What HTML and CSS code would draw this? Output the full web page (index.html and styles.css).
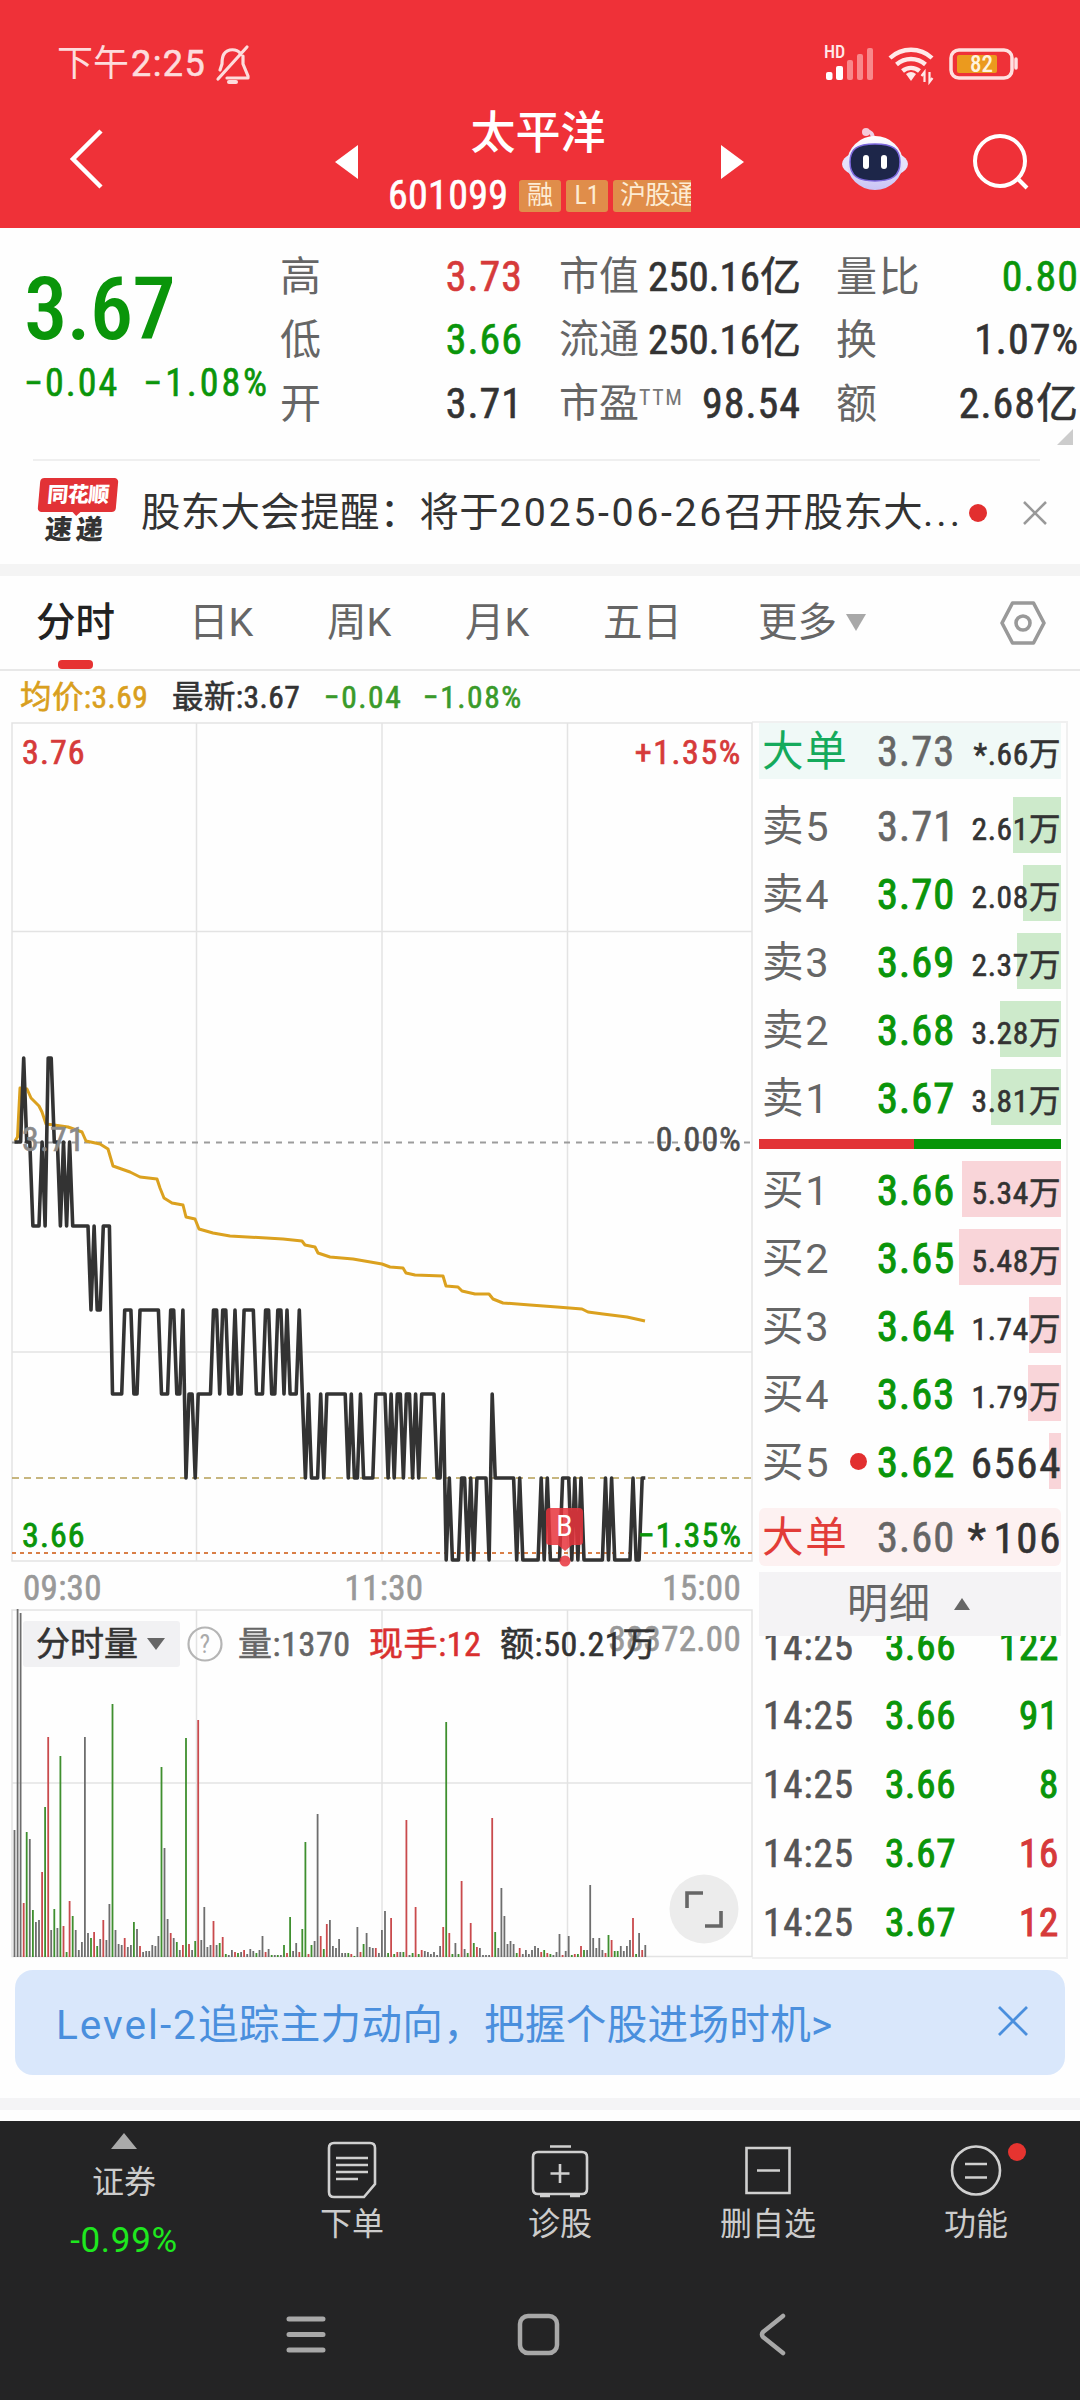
FILE: index.html
```html
<!DOCTYPE html>
<html lang="zh-CN">
<head>
<meta charset="utf-8">
<title>太平洋 601099</title>
<link rel="stylesheet" href="styles.css">
</head>
<body>
<header class="top">
  <div class="status">
    <span class="clock">下午<b>2:25</b></span>
    <svg class="bell" width="38" height="40" viewBox="0 0 38 40" fill="none" stroke="#fddcdc" stroke-width="3.2" stroke-linecap="round" stroke-linejoin="round"><path d="M33 2 4 34M29 11v8l5 12v2H13M26 8C23 4 14 3 10 9c-2 3-2 6-2 10l-2 6"/><path d="M15 37h7" stroke-width="4"/></svg>
    <div class="status-right">
      <svg width="56" height="36" viewBox="0 0 56 36"><text class="hd" x="0" y="12">HD</text><g fill="#fff"><rect x="2" y="26" width="6.500" height="8" rx="2"/><rect x="12" y="20" width="7" height="14" rx="2"/></g><g fill="#f8888b"><rect x="23" y="14" width="6" height="20" rx="2"/><rect x="33" y="8" width="6" height="26" rx="2"/><rect x="43" y="2" width="6" height="32" rx="2"/></g></svg>
      <svg class="wifi" width="48" height="38" viewBox="0 0 48 38" fill="none" stroke="#ffe9e9" stroke-width="4.400"><path d="M2 13a31 31 0 0 1 42 0M8.500 19.500a22 22 0 0 1 29 0M14.500 26a13 13 0 0 1 17 0"/><path d="M23 36l-5-7q5-4 10 0z" fill="#ffe9e9" stroke="none"/><path d="M36.500 37V27l-3 4M41.500 27v10l3-4" stroke-width="2.200"/></svg>
      <svg width="72" height="34" viewBox="0 0 72 34"><rect x="2" y="3" width="61" height="28" rx="8" fill="none" stroke="#ffe0e0" stroke-width="3.500"/><rect x="8" y="8" width="40" height="18" rx="2" fill="#eb9a1e"/><path d="M67 12v9" stroke="#ffe0e0" stroke-width="3.500" stroke-linecap="round"/><text class="batt" x="32.500" y="25" text-anchor="middle">82</text></svg>
    </div>
  </div>
  <div class="nav">
    <svg class="back" width="40" height="64" viewBox="0 0 40 64"><path d="M34 4 6 32 34 60" fill="none" stroke="#fff" stroke-width="4.500"/></svg>
    <svg class="prev" width="24" height="36" viewBox="0 0 24 36"><path d="M23 1v34L0 18z" fill="#fff"/></svg>
    <div class="title">
      <h1>太平洋</h1>
      <div class="codes"><span class="code">601099</span><span class="tag">融</span><span class="tag">L1</span><span class="tag cut">沪股通</span></div>
    </div>
    <svg class="next" width="24" height="36" viewBox="0 0 24 36"><path d="M1 1v34l23-17z" fill="#fff"/></svg>
    <svg class="robot" width="70" height="64" viewBox="0 0 70 64"><defs><linearGradient id="shell" x1="0" y1="0" x2="0" y2="1"><stop offset="0" stop-color="#fff"/><stop offset="1" stop-color="#c9c3f5"/></linearGradient></defs><path d="M33 13c0-7-2-8-7-9" fill="none" stroke="#ecd0e6" stroke-width="4" stroke-linecap="round"/><circle cx="26" cy="5" r="4" fill="#f6c9d8"/><ellipse cx="35" cy="37" rx="33" ry="15" fill="#e6e2fb"/><ellipse cx="35" cy="36" rx="28" ry="27" fill="url(#shell)"/><path d="M35 17c18 0 25 5 25 18 0 14-8 19-25 19S10 49 10 35c0-13 7-18 25-18z" fill="#1d2649" stroke="#7c68dd" stroke-width="1.500"/><rect x="23" y="28" width="6" height="14" rx="3" fill="#fff"/><rect x="41" y="28" width="6" height="14" rx="3" fill="#fff"/></svg>
    <svg class="search" width="58" height="58" viewBox="0 0 58 58" fill="none" stroke="#fff" stroke-width="4"><circle cx="28" cy="28" r="25"/><path d="m46 46 9 9"/></svg>
  </div>
</header>

<section class="quote">
  <div class="last down">
    <div class="price">3.67</div>
    <div class="chg"><span>−0.04</span><span>−1.08%</span></div>
  </div>
  <dl class="c1">
    <div><dt>高</dt><dd class="up">3.73</dd></div>
    <div><dt>低</dt><dd class="down">3.66</dd></div>
    <div><dt>开</dt><dd>3.71</dd></div>
  </dl>
  <dl class="c2">
    <div><dt>市值</dt><dd class="tight">250.16亿</dd></div>
    <div><dt>流通</dt><dd class="tight">250.16亿</dd></div>
    <div><dt>市盈<sup>TTM</sup></dt><dd>98.54</dd></div>
  </dl>
  <dl class="c3">
    <div><dt>量比</dt><dd class="down">0.80</dd></div>
    <div><dt>换</dt><dd>1.07%</dd></div>
    <div><dt>额</dt><dd>2.68亿</dd></div>
  </dl>
  <i class="corner"></i>
</section>

<section class="news">
  <div class="logo"><span class="logo-a">同花顺</span><span class="logo-b">速递</span></div>
  <p>股东大会提醒：将于<span class="date">2025-06-26</span>召开股东大<span class="dots">...</span></p>
  <i class="dot"></i>
  <svg width="24" height="24" viewBox="0 0 24 24"><path d="m1 1 22 22M23 1 1 23" stroke="#999" stroke-width="2.500"/></svg>
</section>

<nav class="tabs">
  <span class="on">分时</span><span>日K</span><span>周K</span><span>月K</span><span>五日</span><span>更多<i></i></span>
  <svg width="46" height="44" viewBox="0 0 46 44" fill="none" stroke="#999" stroke-width="3.600" stroke-linejoin="round"><path d="M12.500 2h21L44 22 33.500 42h-21L2 22z"/><circle cx="23" cy="22" r="7"/></svg>
</nav>

<div class="info"><span class="avg">均价:3.69</span><span>最新:3.67</span><span class="g">−0.04</span><span class="g">−1.08%</span></div>

<main class="board">
  <div class="charts">
    <svg id="chart" width="752" height="1240" viewBox="0 720 752 1240">
      <g class="grid">
        <path d="M12 723H752V1561H12zM12 1610H752V1956.500H12z"/>
        <path d="M196.500 723V1561M382 723V1561M567.500 723V1561M12 931.500H752M12 1352H752M196.500 1610V1956M382 1610V1956M567.500 1610V1956M12 1783H752"/>
      </g>
      <path class="zero" d="M12 1142.500H752"/>
      <path class="level" d="M12 1478H752"/>
      <path class="low" d="M12 1553H752"/>
      <g id="bars"></g>
      <path class="mean" d="M15 1141 17.500 1137 20 1088 27 1089 31 1098 39 1106 42 1112 46 1124 54 1125 68 1127 82 1132 86 1141 100 1144 108 1149 113 1166 130 1172 140 1177 157 1179 160 1188 164 1198 172 1203 183 1205 186 1217 195 1219 199 1229 213 1233 230 1236 283 1239 302 1241 305 1245 315 1247 318 1253 330 1257 353 1259 382 1264 390 1267 403 1268 406 1273 415 1275 443 1276 446 1286 458 1287 462 1291 475 1294 489 1294 493 1299 503 1303 530 1305 557 1307 582 1309 588 1312 603 1314 627 1317 645 1321"/>
      <path class="line" id="line"/>
      <g class="lab">
        <text class="up" x="22" y="764">3.76</text><text class="up wide" x="742" y="764" text-anchor="end">+1.35%</text>
        <text class="ref" x="22" y="1151">3.71</text><text class="mid" x="742" y="1151" text-anchor="end">0.00%</text>
        <text class="down" x="22" y="1547">3.66</text><text class="down" x="742" y="1547" text-anchor="end">−1.35%</text>
      </g>
      <g class="time"><text x="23" y="1600">09:30</text><text x="384" y="1600" text-anchor="middle">11:30</text><text x="741" y="1600" text-anchor="end">15:00</text><text x="741" y="1651" text-anchor="end">38372.00</text></g>
      <g class="buy"><path d="M550 1508h29q4 0 4 4v30q0 3-4 3h-7l-7 6-7-6h-8q-4 0-4-3v-30q0-4 4-4z"/><circle cx="565" cy="1561" r="5.500"/><text x="564.500" y="1536" text-anchor="middle">B</text></g>
    </svg>
    <div class="vol-head">
      <span class="pick">分时量<i></i></span>
      <svg width="36" height="36" viewBox="0 0 36 36"><circle cx="18" cy="18" r="16.500" fill="none" stroke="#b5b5b5" stroke-width="2.200"/><text x="18" y="27" text-anchor="middle" class="q">?</text></svg>
      <span class="v1">量:1370</span><span class="v2">现手:12</span><span class="v3">额:50.21万</span>
    </div>
    <svg class="expand" width="70" height="70" viewBox="0 0 70 70"><circle cx="35" cy="35" r="34.500" fill="#ececec"/><path d="M18 34V19h16M52 37v15H36" fill="none" stroke="#666" stroke-width="3.600"/></svg>
  </div>

  <aside class="book">
    <div class="row big sell"><span>大单</span><b class="flat">3.73</b><em>*.66万</em></div>
    <div class="asks">
      <div class="row"><i style="width:48px"></i><span>卖5</span><b class="flat">3.71</b><em>2.61万</em></div>
      <div class="row"><i style="width:38px"></i><span>卖4</span><b>3.70</b><em>2.08万</em></div>
      <div class="row"><i style="width:44px"></i><span>卖3</span><b>3.69</b><em>2.37万</em></div>
      <div class="row"><i style="width:61px"></i><span>卖2</span><b>3.68</b><em>3.28万</em></div>
      <div class="row"><i style="width:70px"></i><span>卖1</span><b>3.67</b><em>3.81万</em></div>
    </div>
    <div class="split"><i></i></div>
    <div class="bids">
      <div class="row"><i style="width:99px"></i><span>买1</span><b>3.66</b><em>5.34万</em></div>
      <div class="row"><i style="width:102px"></i><span>买2</span><b>3.65</b><em>5.48万</em></div>
      <div class="row"><i style="width:32px"></i><span>买3</span><b>3.64</b><em>1.74万</em></div>
      <div class="row"><i style="width:33px"></i><span>买4</span><b>3.63</b><em>1.79万</em></div>
      <div class="row"><i style="width:12px"></i><span>买5</span><u></u><b>3.62</b><em class="full">6564</em></div>
    </div>
    <div class="row big buyer"><span>大单</span><b class="flat">3.60</b><em class="full">*<s></s>106</em></div>
    <div class="detail">明细<i></i></div>
    <div class="ticks">
      <div><span>14:25</span><b>3.66</b><em>122</em></div>
      <div><span>14:25</span><b>3.66</b><em>91</em></div>
      <div><span>14:25</span><b>3.66</b><em>8</em></div>
      <div><span>14:25</span><b>3.67</b><em class="up">16</em></div>
      <div><span>14:25</span><b>3.67</b><em class="up">12</em></div>
    </div>
  </aside>
</main>

<div class="banner"><span><b>Level-2</b>追踪主力动向，把握个股进场时机<b>&gt;</b></span><svg width="30" height="30" viewBox="0 0 30 30"><path d="m1 1 28 28M29 1 1 29" stroke="#4a8fdd" stroke-width="2.800"/></svg></div>
<div class="band"></div>

<footer class="dock">
  <div class="tools">
    <div class="index"><i></i><span>证券</span><b>-0.99%</b></div>
    <div class="tool t1"><svg width="60" height="60" viewBox="0 0 60 60"><path d="M12 3h36q5 0 5 5v36L42 57H12q-5 0-5-5V8q0-5 5-5zM14 18h32M14 25h32M14 32h32M14 39h22"/></svg><span>下单</span></div>
    <div class="tool t2"><svg width="60" height="60" viewBox="0 0 60 60"><path d="M8 12h44q5 0 5 5v32q0 5-5 5H8q-5 0-5-5V17q0-5 5-5zM20 6.500h21M30 24v19M20.500 33.500h19M10 56h10M40 56h10"/></svg><span>诊股</span></div>
    <div class="tool t3"><svg width="60" height="60" viewBox="0 0 60 60"><path d="M8.500 8h43v45h-43zM19 30.500h23"/></svg><span>删自选</span></div>
    <div class="tool t4"><svg width="60" height="60" viewBox="0 0 60 60"><circle cx="30" cy="30.500" r="24"/><path d="M19 24h22M19 37.500h22"/></svg><span>功能</span><i></i></div>
  </div>
  <div class="sys">
    <svg width="42" height="46" viewBox="0 0 42 46"><path d="M4 7h34M4 22.500h34M4 38h34" stroke-width="5"/></svg>
    <svg width="46" height="46" viewBox="0 0 46 46"><rect x="5" y="4" width="37" height="37" rx="8" stroke-width="4.500"/></svg>
    <svg width="34" height="46" viewBox="0 0 34 46"><path d="M27 4 7 20q-2 2.500 0 5l20 16" stroke-width="4.500"/></svg>
  </div>
</footer>
<script src="chart.js"></script>
</body>
</html>
```
FILE: styles.css
```css
* { box-sizing: border-box; margin: 0; padding: 0; }
body {
  width: 1080px; height: 2400px; overflow: hidden; background: #fefefe; color: #333;
  font-family: "Roboto Condensed", "Noto Sans CJK SC", sans-serif; white-space: nowrap;
}
svg { display: block; flex: none; overflow: visible; }
b, em, i, h1, u, s { font-style: normal; text-decoration: none; font-weight: 400; }
.up { color: #d63a3a; fill: #d63a3a; }
.down { color: #0a950a; fill: #0a950a; }

/* semi-medium weight for figures */
.clock b, .code, .chg, dd, .info span, .row b.flat, .row em, .ticks span, .v1, .v2, .v3, .pick { -webkit-text-stroke: .6px currentColor; }
.row b, .ticks b, .ticks em { -webkit-text-stroke: 1px currentColor; }
.lab .up { stroke: #d63a3a; stroke-width: .7px; }
.lab .down { stroke: #0a950a; stroke-width: .8px; }
.lab .mid { stroke: #4d4d4d; stroke-width: .6px; }
.lab .ref { stroke: #8a8a8a; stroke-width: .6px; }
.time text { stroke: #999; stroke-width: .6px; }

/* header */
.top { height: 228px; background: #ef3138; color: #fff; }
.status { height: 104px; padding: 40px 57px 0; display: flex; align-items: flex-start; color: #fddcdc; }
.clock { font-size: 36px; line-height: 48px; }
.clock b { font-family: Roboto; font-size: 36px; margin-left: 2px; letter-spacing: 1.4px; }
.bell { margin: 5px 0 0 8px; }
.status-right { margin-left: auto; display: flex; align-items: center; gap: 8px; padding-top: 5px; margin-right: 2px; }
.wifi { margin-right: 5px; }
.hd { font-size: 18px; font-weight: 500; fill: #ffe9e9; }
.batt { font-size: 23px; font-weight: 500; fill: #fff3e0; }
.nav { height: 124px; display: flex; align-items: flex-start; padding-left: 67px; }
.back { margin-top: 23px; }
.prev { margin: 40px 0 0 228px; }
.title { width: 303px; margin: 0 29px; }
h1 { font-size: 45px; line-height: 60px; font-weight: 500; text-align: center; text-indent: -3px; }
.codes { display: flex; align-items: center; height: 36px; margin-top: 14px; overflow: hidden; }
.code { flex: none; font-size: 40px; line-height: 36px; width: 131px; letter-spacing: .3px; }
.tag { flex: none; height: 32px; line-height: 31px; font-size: 26px; margin-right: 5px; border-radius: 3px; background: #e08d4a; color: #fdecd4; width: 42px; text-align: center; }
.tag.cut { width: 82px; padding-left: 7px; text-align: left; letter-spacing: -1px; border-radius: 3px 0 0 3px; margin: 0; }
.next { margin-top: 40px; }
.robot { margin: 23px 0 0 96px; }
.search { margin: 29px 0 0 62px; }

/* quote summary */
.quote { height: 231px; position: relative; display: flex; padding: 17px 1px 0 26px; }
.last { width: 254px; }
.price { font-size: 87px; line-height: 100px; font-weight: 500; letter-spacing: -1px; margin: 14px 0 0 -2px; }
.chg { display: flex; gap: 24px; font-size: 38px; line-height: 44px; margin: 2px 0 0 -2px; letter-spacing: 2px; }
.chg span + span { letter-spacing: 2.9px; }
.quote dl > div { height: 63.5px; display: flex; justify-content: space-between; align-items: center; line-height: 60px; }
.c1 { width: 243px; }
.c2 { width: 242px; margin-left: 36px; }
.c3 { flex: 1; margin-left: 35px; }
dt { font-size: 41px; color: #666; font-weight: 400; }
dt sup { font-size: 22px; vertical-align: 12px; line-height: 0; letter-spacing: 1.6px; color: #777; }
dd { font-size: 42px; letter-spacing: 1px; }
dd.tight { font-size: 41px; letter-spacing: 0; }
.c2 dt { font-size: 40px; }
.c3 dt { letter-spacing: 1.8px; }
.corner { position: absolute; right: 7px; bottom: 14px; border: 8px solid transparent; border-right-color: #ccc; border-bottom-color: #ccc; }

/* news strip */
.news { height: 105px; margin-left: 33px; width: 1007px; border-top: 2px solid #efefef; display: flex; align-items: center; padding-left: 3px; }
.news > * { flex: none; }
.logo { width: 84px; height: 70px; display: flex; flex-direction: column; align-items: center; font-weight: 900; text-align: center; }
.logo-a { position: relative; width: 78px; height: 34px; line-height: 34px; font-size: 21px; background: #e23236; color: #fff; border-radius: 4px; transform: skewX(-5deg); letter-spacing: -.5px; }
.logo-a::after { content: ""; position: absolute; left: 34px; top: 33px; border: 5px solid transparent; border-top-color: #e23236; border-bottom: 0; }
.logo-b { font-size: 27px; line-height: 36px; margin-left: -4px; letter-spacing: 4px; transform: skewX(-5deg); }
.news p { font-size: 39.4px; line-height: 60px; margin-left: 21px; width: 828px; letter-spacing: .4px; }
.date { font-family: Roboto; letter-spacing: 2.6px; }
.dots { letter-spacing: 3px; }
.dot { width: 18px; height: 18px; border-radius: 50%; background: #e22f2f; }
.news > svg { margin-left: 36px; }

/* period tabs */
.tabs { height: 107px; border-top: 12px solid #f4f4f4; border-bottom: 2px solid #e8e8e8; display: flex; align-items: center; font-family: Roboto, "Noto Sans CJK SC", sans-serif; font-size: 39.5px; line-height: 93px; color: #666; padding: 0 34px 0 36px; }
.tabs span { position: relative; width: 138px; }
.tabs span:nth-child(1) { width: 153px; }
.tabs span:nth-child(5) { width: 155px; }
.tabs span:nth-child(6) { display: flex; align-items: center; }
.tabs span i { margin-left: 9px; border: 10px solid transparent; border-top: 17px solid #a8a8a8; border-bottom: 0; }
.tabs svg { margin-left: auto; }
.tabs .on { color: #222; font-weight: 500; }
.tabs .on::after { content: ""; position: absolute; left: 22px; bottom: 0; width: 35px; height: 9px; border-radius: 4px; background: #e63232; }

.info { height: 49px; display: flex; padding-left: 20px; font-size: 31.5px; line-height: 53px; }
.info span { width: 152px; letter-spacing: .4px; }
.info .g { width: 99px; color: #3a9a2a; letter-spacing: 1.5px; }
.info .avg { color: #d99f1e; }

/* chart + order book */
.board { height: 1240px; display: flex; }
.charts { position: relative; width: 752px; }
.grid path { fill: none; stroke: #e3e3e3; stroke-width: 1.5; }
.zero { stroke: #9c9c9c; stroke-width: 1.800; stroke-dasharray: 6 6; }
.level { stroke: #b59f55; stroke-width: 1.500; stroke-dasharray: 7 5; }
.low { stroke: #d97f47; stroke-width: 2; stroke-dasharray: 4 4; }
.mean { fill: none; stroke: #dba11f; stroke-width: 3; stroke-linejoin: round; }
.line { fill: none; stroke: #333; stroke-width: 3.6; stroke-linejoin: round; }
.lab text { font-size: 34px; letter-spacing: 1.1px; }
.lab .wide { letter-spacing: 1.6px; }
.lab .mid { fill: #4d4d4d; }
.lab .ref { fill: #8a8a8a; }
.time text { font-size: 35px; fill: #999; letter-spacing: .3px; }
.buy path, .buy circle { fill: #e8343c; fill-opacity: .85; }
.buy text { font-size: 30px; fill: #fff; }
#bars path { stroke-width: 1.8; fill: none; }
#bars .k { stroke: #6e6e6e; }
#bars .r { stroke: #c94a4d; }
#bars .g { stroke: #3f8f2f; }
.vol-head { position: absolute; left: 23px; top: 901px; height: 46px; line-height: 46px; display: flex; align-items: center; font-size: 34px; letter-spacing: .6px; }
.pick { width: 157px; background: #f1f1f3; border-radius: 3px; padding-left: 13px; margin-right: 7px; color: #333; display: flex; align-items: center; letter-spacing: 0; }
.pick i { margin-left: 9px; border: 9px solid transparent; border-top: 12px solid #666; border-bottom: 0; }
.q { font-size: 25px; fill: #aaa; }
.v1 { margin-left: 15px; width: 131px; color: #666; }
.v2 { width: 131px; color: #d9302f; }
.expand { position: absolute; left: 669px; top: 1154px; }

.book { width: 316px; height: 1238px; margin-top: 1px; border: 2px solid #f0f0f0; border-left: 0; padding: 0 5px 0 7px; overflow: hidden; }
.row { position: relative; height: 56px; margin-bottom: 12px; display: flex; align-items: center; line-height: 60px; padding: 3px 0 0 4px; }
.row i { position: absolute; right: 0; top: 0; height: 56px; background: #cdeacb; }
.bids .row i { background: #f9d5d9; }
.row span { position: relative; width: 115px; font-family: Roboto, "Noto Sans CJK SC", sans-serif; font-size: 41.5px; letter-spacing: 1.8px; color: #666; margin-left: -1px; }
.row b { position: relative; font-size: 42.5px; color: #0a950a; letter-spacing: 1px; margin-left: 0; }
.row b.flat { color: #666; }
.row em { position: relative; margin-left: auto; font-size: 31.500px; letter-spacing: .6px; padding-top: 6px; }
.row em.full { font-size: 43px; letter-spacing: 1.6px; padding-top: 0; margin-right: -1px; }
.row em s { display: inline-block; width: 6px; }
.row u { position: absolute; left: 91px; top: 20px; width: 17px; height: 17px; border-radius: 50%; background: #e22f2f; }
.big { margin-bottom: 18px; padding-top: 2px; }
.sell { background: #f0f9f7; }
.sell span { color: #15aa5c; }
.buyer { background: #fdf1f1; border-radius: 6px; margin: 0 0 6px; height: 58px; }
.buyer span { color: #e23c38; }
.asks { height: 342px; }
.split { height: 10px; background: #089508; margin-bottom: 12px; }
.split i { display: block; width: 155px; height: 10px; background: #e23336; }
.bids { height: 347px; }
.detail { height: 64px; background: #f4f3f5; color: #666; font-size: 41px; line-height: 64px; display: flex; align-items: center; padding-left: 88px; position: relative; letter-spacing: 1px; }
.detail i { margin-left: 23px; border: 8px solid transparent; border-bottom: 12px solid #666; border-top: 0; }
.ticks { height: 322px; overflow: hidden; display: flex; flex-direction: column; justify-content: flex-end; }
.ticks div { flex: none; height: 69px; display: flex; align-items: center; font-size: 39px; line-height: 69px; padding: 0 2px 0 4px; letter-spacing: .8px; color: #555; }
.ticks span { width: 122px; letter-spacing: 1px; }
.ticks b { color: #0a950a; }
.ticks em { margin-left: auto; color: #0a950a; }
.ticks em.up { color: #d63a3a; }

/* banner */
.banner { width: 1050px; height: 105px; margin: 10px 0 23px 15px; border-radius: 18px; background: #d9e7fb; color: #4a8fdd; display: flex; align-items: center; justify-content: space-between; padding: 0 37px 3px 41px; font-size: 40.6px; letter-spacing: .3px; }
.banner b { font-family: Roboto; letter-spacing: 2px; }
.band { height: 12px; background: #f4f4f6; margin-bottom: 11px; }

/* bottom dock */
.dock { height: 279px; background: #242425; color: #ccc; }
.tools { height: 156px; display: flex; font-size: 32px; line-height: 40px; }
.index { width: 248px; display: flex; flex-direction: column; align-items: center; padding-top: 12px; }
.index i { border: 13px solid transparent; border-bottom: 16px solid #aaa; border-top: 0; }
.index span { margin-top: 13px; }
.index b { margin-top: 19px; font-family: Roboto; font-size: 35px; color: #1ee81e; letter-spacing: .7px; }
.tool { width: 208px; padding-top: 19px; display: flex; flex-direction: column; align-items: center; position: relative; }
.tool svg, .sys svg { fill: none; stroke: #d0d0d0; stroke-width: 2.600; }
.tool span { margin-top: 4px; }
.t4 i { position: absolute; left: 136px; top: 22px; width: 18px; height: 18px; border-radius: 50%; background: #e63430; }
.sys { display: flex; padding: 35px 0 0 285px; }
.sys svg { stroke: #a8a8a8; stroke-linecap: round; }
.sys svg:nth-child(2) { margin-left: 188px; }
.sys svg:nth-child(3) { margin-left: 195px; }
```
FILE: chart.js
```js
// One entry per trading minute: last digit of the price (3.66 - 3.72).
const prices = '111' + '2' + '11' + '000' + '1' + '0' + '22' + '11' + '0101' + '000000' + '9' + '0' + '99' + '000' +
  '8888' + '999' + '88' + '9999999' + '888' + '99' + '88' + '9' + '7' + '88' + '7' + '88888' + '99' + '8' + '99' + '88' +
  '9' + '88' + '9999' + '888' + '99' + '88' + '99' + '8' + '9' + '888' + '9' + '8' + '7' + '8' + '777' + '8' + '7' +
  '8888888' + '7' + '8' + '77' + '8' + '7777' + '8888' + '7' + '8' + '7' + '88' + '7' + '88' + '7' + '8' + '7' +
  '88888' + '77' + '8' + '6' + '7' + '666' + '77' + '6' + '7' + '6' + '7777' + '6' + '8' + '7777777' + '6' + '7' +
  '666666' + '7' + '6' + '7' + '6666' + '777' + '6' + '7' + '6' + '7' + '6666666' + '7' + '6' + '7' + '666666' + '7' + '66' + '77';

// Volume bar heights with their colour class.
const volumes = ('127k 348k 344k 54r 125g 118k 47g 35k 37k 85r 150g 220r 27k 48g 29k 201g 31r 5g 56r 41g 27k 7k 15k 220k 24k 19g 25r 11g 18k 37r ' +
  '17k 53k 253g 27k 13k 12k 19r 10k 12k 35g 28k 11r 5k 6k 6k 12k 11k 21k 190g 109k 38k 24r 19k 15g 7k 12r 219g 13r 7k 16g ' +
  '237r 17k 50k 10k 12k 36r 12k 14g 20r 3g 2k 7k 5r 4g 5k 7r 3k 8k 6k 4g 7k 21k 5r 8k 2g 2k 2g 2k 12g 4r ' +
  '40g 6k 14k 5r 28g 115g 3r 12g 16k 143k 21r 8g 33r 37k 11k 9k 18k 4k 4k 4g 3r 1g 30k 5r 13g 24k 10k 9k 9r 4k ' +
  '27k 46k 4g 39r 3g 5r 5k 5g 137r 2k 4g 50r 3g 7r 6k 5k 3k 5k 2k 11k 30r 235g 24r 3g 14k 3g 76r 8k 4g 34r ' +
  '14g 10r 9k 2k 2k 2k 139r 25g 9k 69k 41k 13k 16k 13k 4g 9r 3k 7k 3k 7k 11k 9k 5r 7g 4r 3g 2k 5k 23k 2r ' +
  '6k 21k 2g 3r 3g 11r 7g 7k 72k 19k 9k 19k 7k 4r 22g 17r 6g 6g 11k 6k 11k 17k 39r 3g 24k 7r 12k').split(' ');

const X0 = 14.5, STEP = 3.062;
const level = { 2: 1058, 1: 1142, 0: 1226, 9: 1310, 8: 1394, 7: 1478, 6: 1560 };
const x = i => (X0 + i * STEP).toFixed(1);

document.getElementById('line').setAttribute('d',
  'M' + [...prices].map((p, i) => x(i) + ' ' + level[p]).join('L'));

document.getElementById('bars').innerHTML = ['k', 'r', 'g'].map(c =>
  `<path class="${c}" d="${volumes.map((v, i) => v.endsWith(c) ? `M${x(i)} 1957v-${parseInt(v)}` : '').join('')}"/>`).join('');
```
